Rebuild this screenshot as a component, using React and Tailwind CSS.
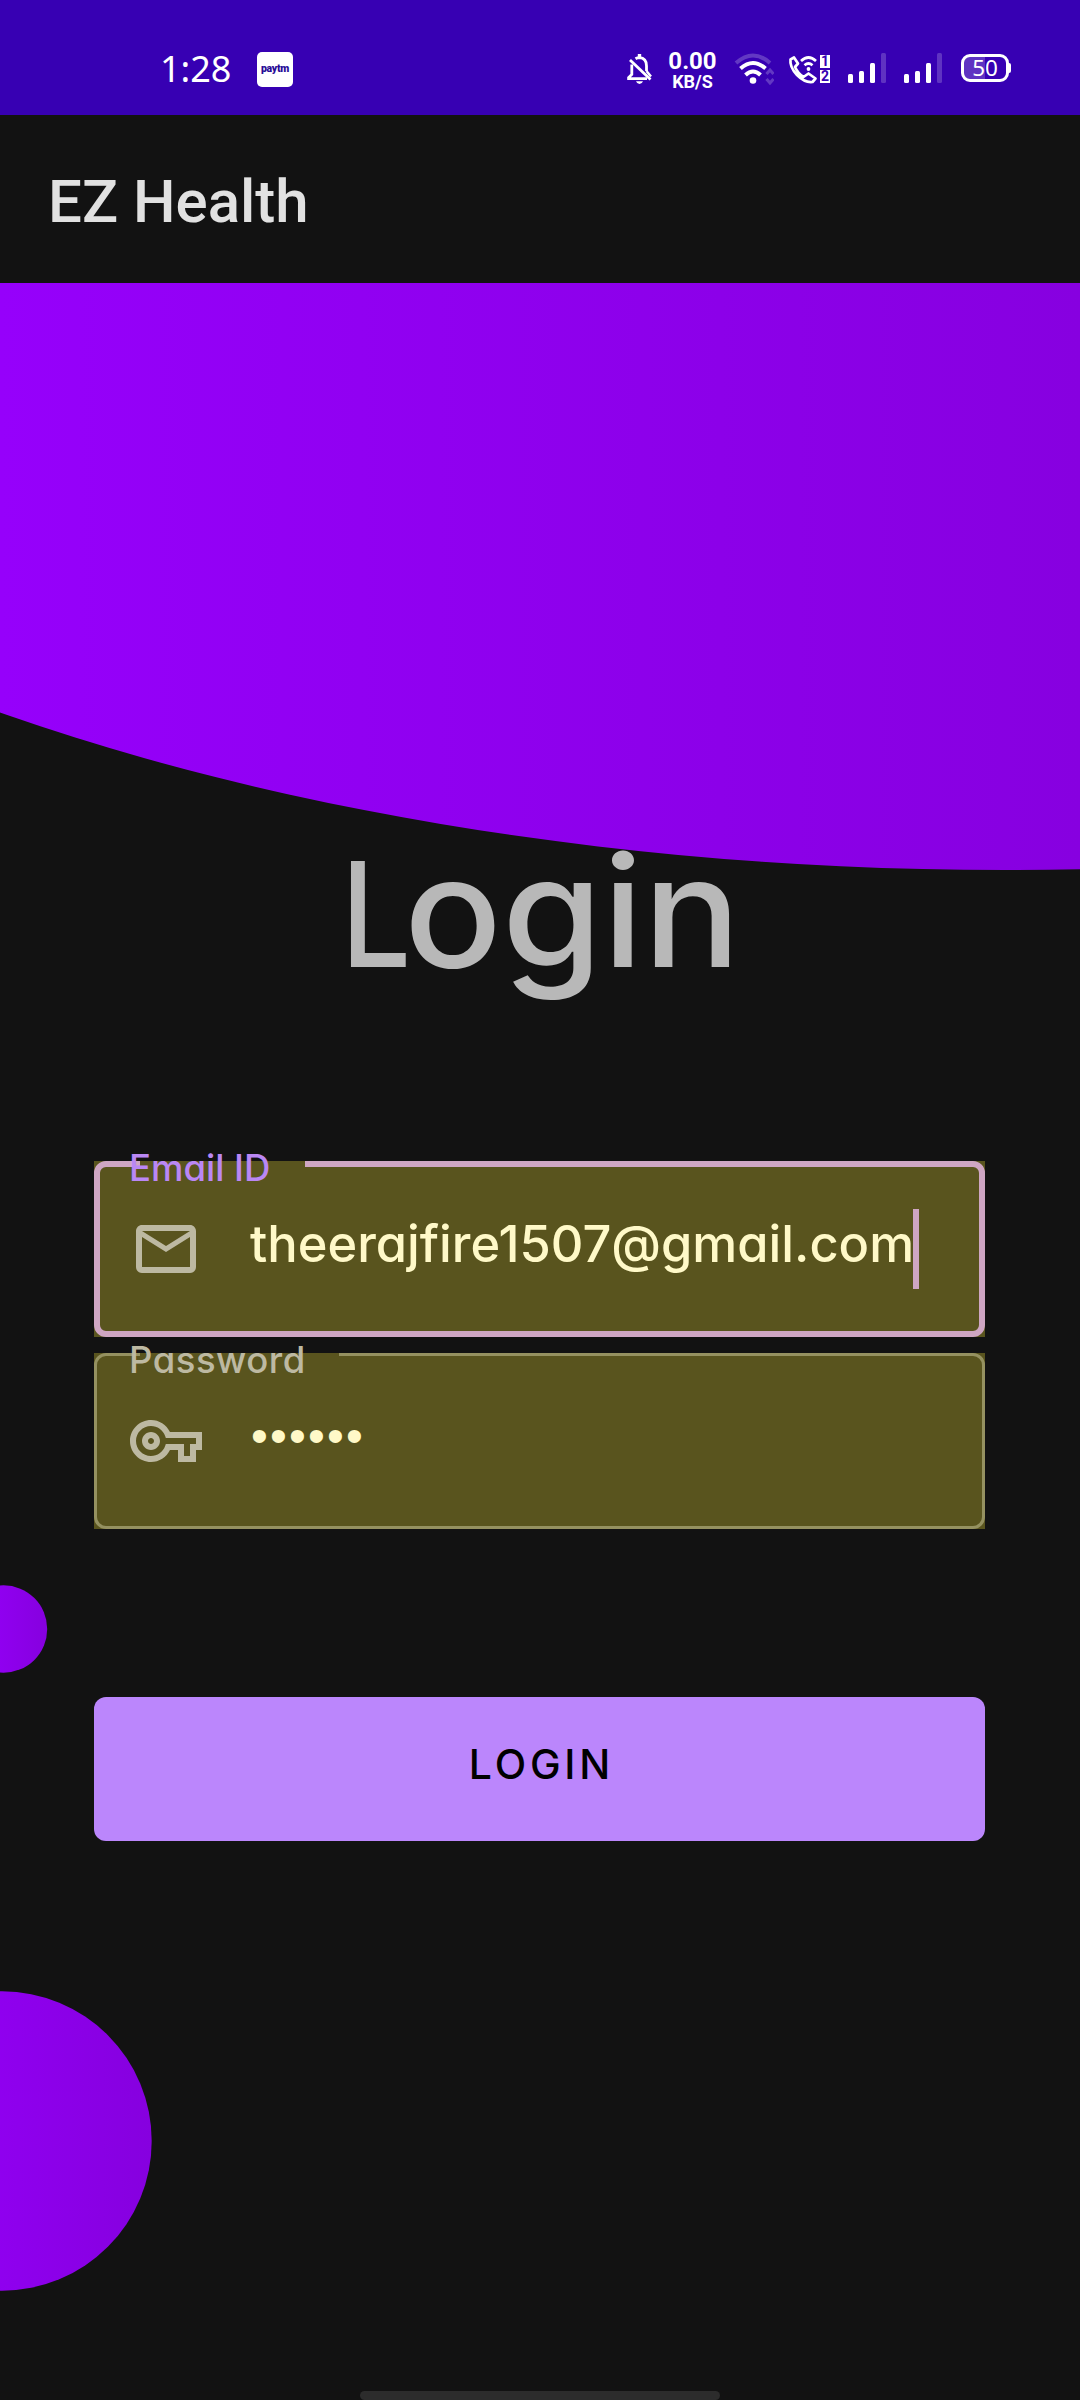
const MAIL =
  "M22 6c0-1.1-.9-2-2-2H4c-1.1 0-2 .9-2 2v12c0 1.1.9 2 2 2h16c1.1 0 2-.9 2-2V6zm-2 0l-8 5-8-5h16zm0 12H4V8l8 5 8-5v10z";
const KEY =
  "M22 19h-6v-4h-2.68c-1.14 2.42-3.6 4-6.32 4-3.86 0-7-3.14-7-7s3.14-7 7-7c2.72 0 5.17 1.58 6.32 4H24v6h-2v4zm-4-2h2v-4h2v-2H11.94l-.23-.67C11.01 8.34 9.11 7 7 7c-2.76 0-5 2.24-5 5s2.24 5 5 5c2.11 0 4.01-1.34 4.71-3.33l.23-.67H18v4zM7 15c-1.65 0-3-1.35-3-3s1.35-3 3-3 3 1.35 3 3-1.35 3-3 3zm0-4c-.55 0-1 .45-1 1s.45 1 1 1 1-.45 1-1-.45-1-1-1z";

function BellOff() {
  return (
    <svg className="ml-[333px] h-[32px] w-[27px]" viewBox="0 0 27 32" fill="none" stroke="#fff" strokeWidth="2.8">
      <path d="M9.5 5.8Q11.4 4.6 13.5 4.6Q20.5 5 20.5 13V18" />
      <path d="M5.8 11.5V21.5L2.6 24.6V25.6H21" />
      <path d="M4 7L24.5 26.5" />
      <path d="M13.5 1V5" strokeWidth="3.4" />
      <path d="M20.5 18L25 23.5" strokeWidth="2.4" />
      <path d="M10 28.3H17Q16 31 13.5 31Q11 31 10 28.3Z" fill="#fff" stroke="none" />
    </svg>
  );
}

function Wifi() {
  return (
    <svg className="ml-[15px] h-[34px] w-[40px]" viewBox="0 0 40 34" fill="none" stroke="#fff">
      <path d="M2 10Q19 -5 36 10" strokeWidth="4" opacity=".22" />
      <path d="M6.5 15.5Q19 4.5 31.5 15.5" strokeWidth="4" />
      <path d="M11.5 22Q19 15 26.5 22" strokeWidth="4" />
      <circle cx="19" cy="27.5" r="3.3" fill="#fff" stroke="none" />
      <path d="M32.5 21L36 17L39.5 21M32.5 26L36 30L39.5 26" strokeWidth="3" opacity=".22" />
    </svg>
  );
}

function WifiCall() {
  return (
    <svg className="ml-[14px] h-[32px] w-[30px]" viewBox="0 0 30 32" fill="none" stroke="#fff" strokeWidth="2.7" strokeLinejoin="round">
      <path d="M2.5 6.5L6 4.5L10 10.5L7 14Q10 20.5 15.5 24L20.5 20.5L27.5 25.5L24.5 29Q17 30 9 22Q1.5 14 2.5 6.5Z" />
      <path d="M13 8Q20.5 1 28 8" />
      <path d="M16.5 12.3Q20.5 8.7 24.5 12.3" />
      <circle cx="20.5" cy="16" r="1.9" fill="#fff" stroke="none" />
    </svg>
  );
}

function Signal() {
  return (
    <div className="flex h-[30px] w-[38px] items-end gap-[6px]">
      <span className="h-[9px] w-[5px] rounded-[1.5px] bg-white" />
      <span className="h-[12px] w-[5px] rounded-[1.5px] bg-white" />
      <span className="h-[20px] w-[5px] rounded-[1.5px] bg-white" />
      <span className="h-[30px] w-[5px] rounded-[1.5px] bg-white/20" />
    </div>
  );
}

function StatusBar() {
  return (
    <div className="flex h-[115px] items-center bg-[#3700b3] pt-[23px] text-white">
      <div className="flex h-[92px] -translate-y-px items-start">
        <span className="ml-[160px] mt-[28px] w-[74px] font-['Noto_Sans',sans-serif] text-[36px] leading-[37px]">1:28</span>
        <span className="ml-[23px] mt-[30px] flex h-[35px] w-[36px] items-center justify-center rounded-[5px] bg-white font-['Roboto',sans-serif] text-[10.5px] leading-none font-black tracking-[-0.3px] text-[#2a0c96]">
          paytm
        </span>
        <div className="mt-[31px] flex items-start">
          <BellOff />
          <div className="-mt-[3px] ml-[13px] flex w-[53px] flex-col items-center font-['Roboto',sans-serif] font-bold">
            <span className="text-[24px] leading-[23px]">0.00</span>
            <span className="text-[18px] leading-[17px]">KB/S</span>
          </div>
          <Wifi />
          <WifiCall />
          <div className="ml-[2px] mt-[2px] flex flex-col gap-[2px] font-['Roboto',sans-serif] text-[14px] leading-[13px] font-bold text-[#3700b3]">
            <span className="h-[13px] w-[10px] bg-white text-center">1</span>
            <span className="h-[13px] w-[10px] bg-white text-center">2</span>
          </div>
          <div className="ml-[18px] flex gap-[18px]">
            <Signal />
            <Signal />
          </div>
          <div className="ml-[19px] mt-[1px] flex items-center">
            <div className="flex h-[28px] w-[48px] items-center justify-center rounded-[9px] border-[3px] border-white bg-linear-to-r from-white/20 from-50% to-transparent to-50% font-['Noto_Sans',sans-serif] text-[22.5px] leading-none">
              50
            </div>
            <span className="h-[10px] w-[2px] rounded-r-[2px] bg-white" />
          </div>
        </div>
      </div>
    </div>
  );
}

function Field({ label, labelClass, borderClass, gapClass, icon, children }) {
  return (
    <div className="relative h-[176px] bg-[#59541e]">
      <div className={"absolute inset-0 rounded-[12px] " + borderClass} />
      <div className={"absolute top-0 left-[46px] h-[6px] bg-[#59541e] " + gapClass} />
      <label className={"absolute -top-[11px] left-[35px] text-[36.5px] leading-[37px] font-medium whitespace-nowrap " + labelClass}>{label}</label>
      <div className="flex h-full items-start">
        <svg className="mt-[52px] ml-[36px] size-[72px] shrink-0" viewBox="0 0 24 24" fill="#bdb9a2">
          <path d={icon} />
        </svg>
        {children}
      </div>
    </div>
  );
}

export default function App() {
  return (
    <div className="flex h-[2400px] w-[1080px] flex-col overflow-hidden bg-[#121212] font-['Inter',sans-serif] [font-feature-settings:'cv11']">
      <StatusBar />
      <header className="flex h-[168px] items-center bg-[#121212] px-[48px] font-['Roboto',sans-serif] text-[60px] leading-[60px] font-medium text-[#e1e1e1]">
        <span className="translate-y-[3px]">EZ Health</span>
      </header>
      <main className="relative flex flex-1 flex-col items-center overflow-hidden">
        <svg className="absolute inset-0 h-[2117px] w-[1080px]" viewBox="0 283 1080 2117">
          <defs>
            <linearGradient id="hero" gradientUnits="userSpaceOnUse" x1="0" y1="0" x2="1080" y2="0">
              <stop offset="0" stopColor="#9600fb" />
              <stop offset="1" stopColor="#8700e0" />
            </linearGradient>
            <linearGradient id="orb" x1="0" y1="0" x2="1" y2="0">
              <stop offset="0" stopColor="#9800fe" />
              <stop offset="1" stopColor="#8600df" />
            </linearGradient>
          </defs>
          <ellipse cx="1005" cy="83" rx="1675" ry="787" fill="url(#hero)" />
          <circle cx="3.5" cy="1629" r="43.7" fill="url(#orb)" />
          <circle cx="2" cy="2141" r="149.7" fill="url(#orb)" />
        </svg>
        <h1 className="relative mt-[554px] ml-[341px] flex h-[149px] items-baseline self-start leading-[149px] font-medium text-[#b8b8b8]">
          <span className="w-[63px] origin-left scale-x-[0.85] text-[146px] tracking-[-16px]">L</span>
          <span className="origin-left scale-x-[1.06] text-[153px]">ogin</span>
        </h1>
        <form className="relative mt-[175px] flex w-full flex-col pr-[95px] pl-[94px]">
          <Field
            label="Email ID"
            labelClass="text-[#ba87f5]"
            borderClass="border-[6px] border-[#cfa6c3]"
            gapClass="w-[165px]"
            icon={MAIL}
          >
            <span className="mt-[57px] ml-[48px] w-[663px] text-[50.6px] leading-[51px] font-medium whitespace-nowrap text-[#fff9c8]">
              theerajfire1507@gmail.com
            </span>
            <span className="mt-[48px] h-[80px] w-[6px] bg-[#cfa6c3]" />
          </Field>
          <div className="mt-[16px]">
            <Field
              label="Password"
              labelClass="tracking-[0.5px] text-[#bdb9a2]"
              borderClass="border-[3px] border-[#959160]"
              gapClass="w-[199px]"
              icon={KEY}
            >
              <span className="mt-[59px] ml-[49px] font-['Liberation_Sans',sans-serif] text-[48px] leading-[48px] tracking-[2.2px] text-[#fff9c8]">
                ••••••
              </span>
            </Field>
          </div>
          <button
            type="button"
            className="mt-[168px] flex h-[144px] justify-center rounded-[12px] bg-[#bb86fc] pt-[47px] pl-[4px] text-[41px] leading-[41px] font-medium tracking-[3.8px] text-black"
          >
            LOGIN
          </button>
        </form>
        <div className="mt-auto h-[9px] w-[360px] rounded-full bg-[#2c2c2c]" />
      </main>
    </div>
  );
}
